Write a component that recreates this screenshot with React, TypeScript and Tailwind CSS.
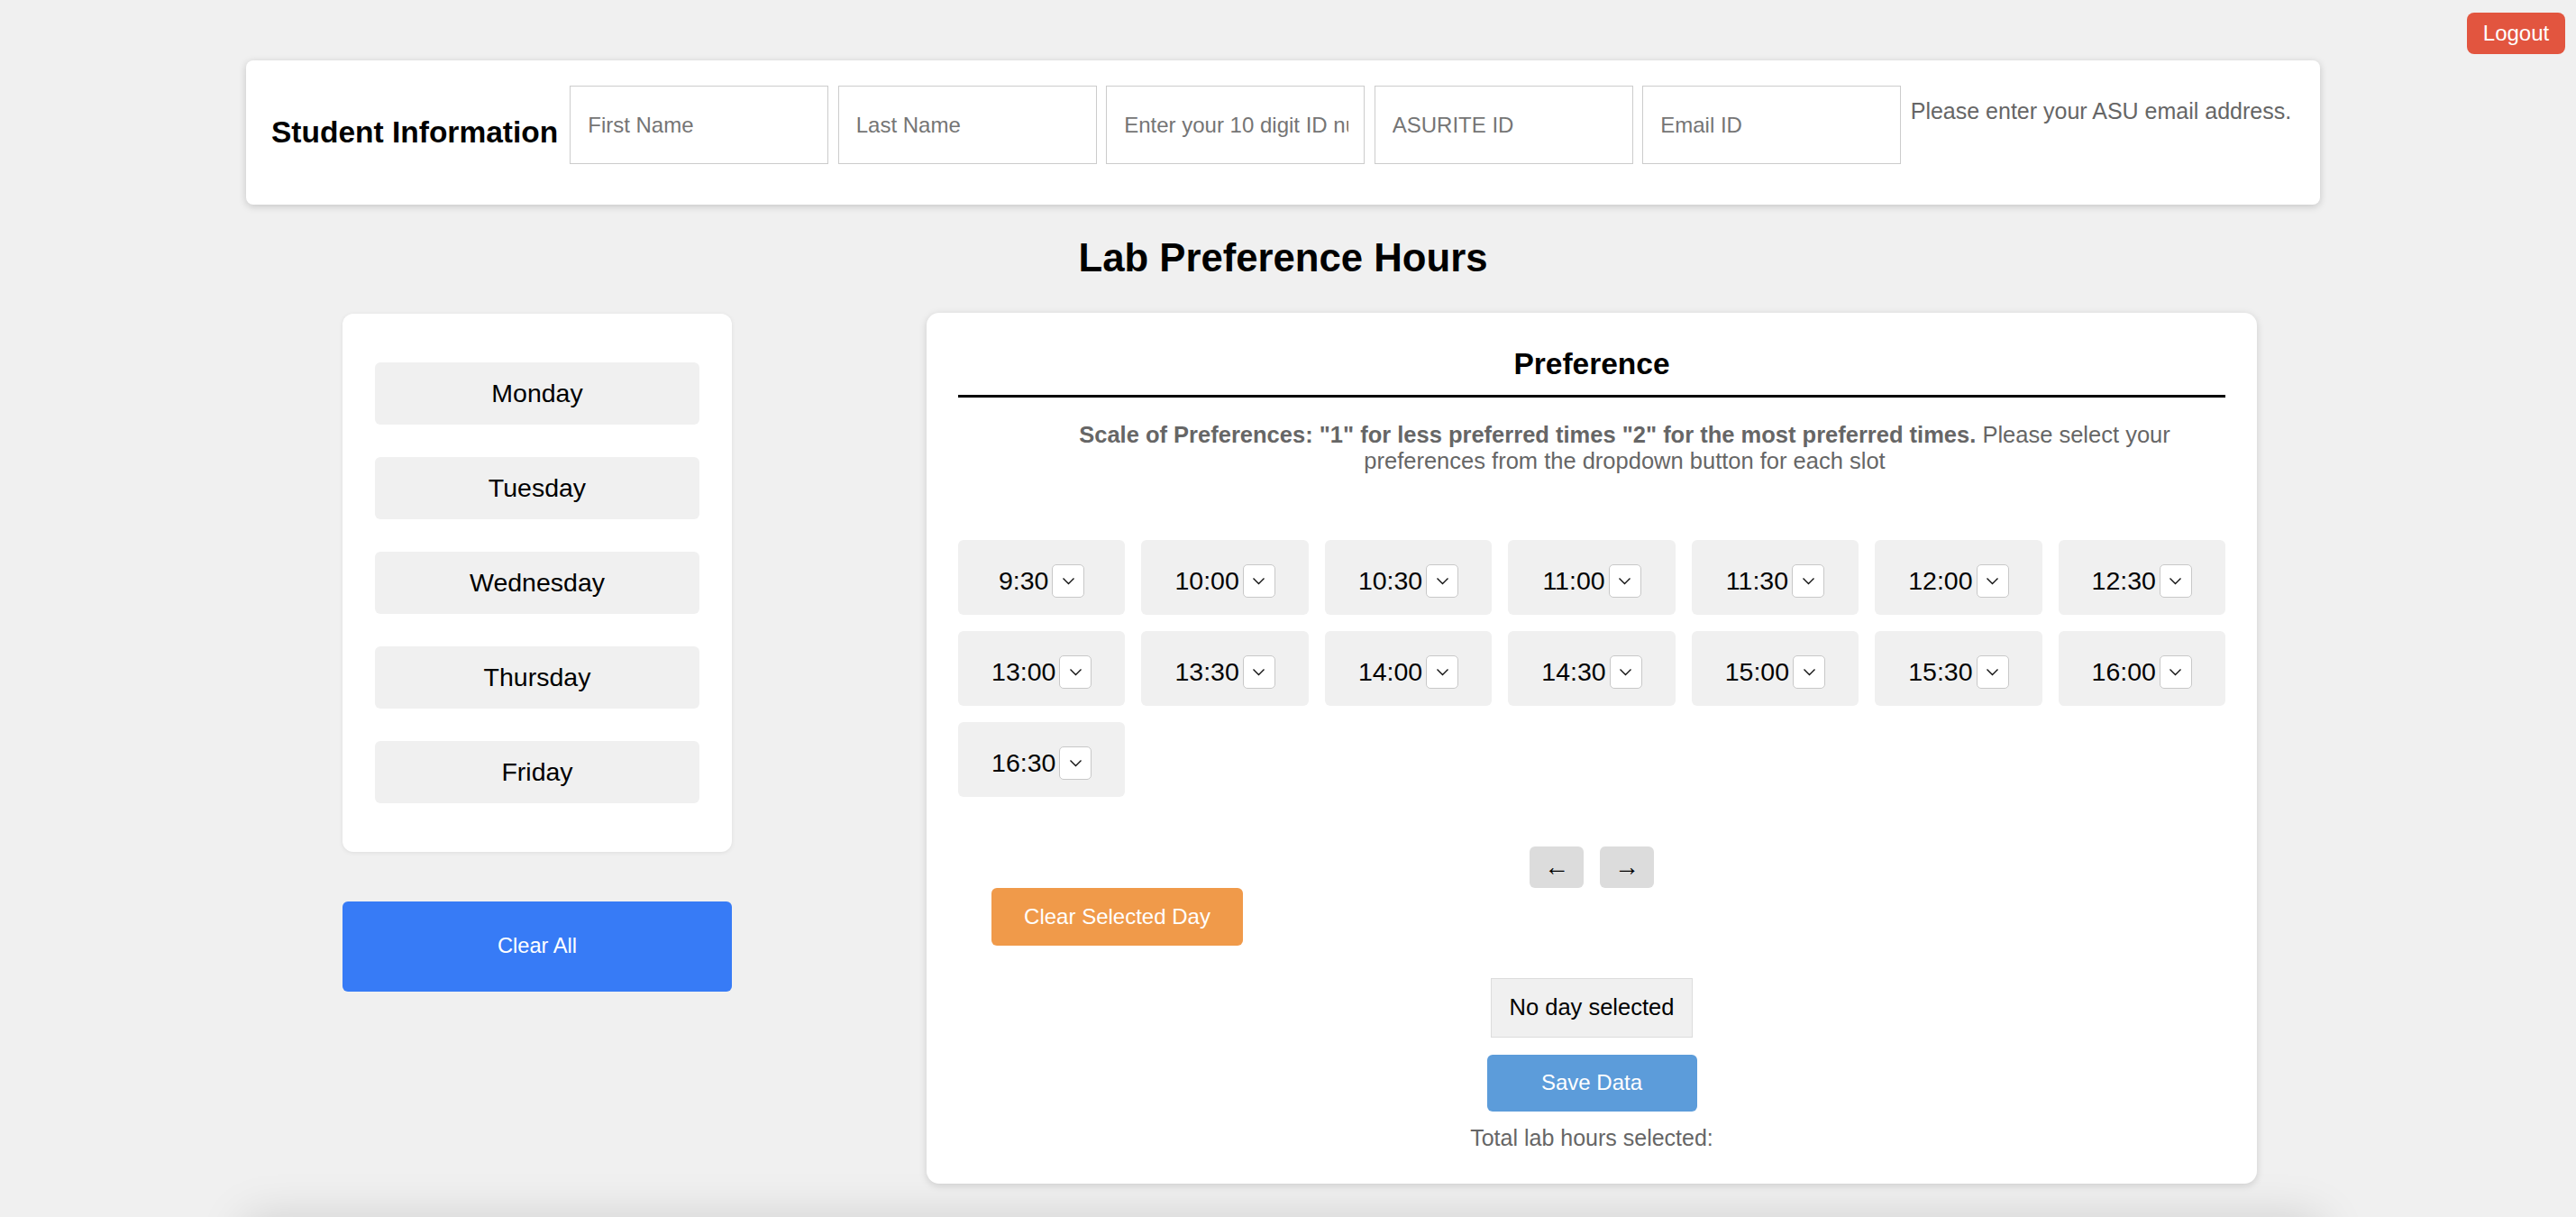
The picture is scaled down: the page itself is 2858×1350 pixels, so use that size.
import React, { useState } from "react";

const days = ["Monday", "Tuesday", "Wednesday", "Thursday", "Friday"];
const slots = [
  "9:30", "10:00", "10:30", "11:00", "11:30", "12:00", "12:30",
  "13:00", "13:30", "14:00", "14:30", "15:00", "15:30", "16:00", "16:30",
];

function Chevron() {
  return (
    <svg width="15" height="9" viewBox="0 0 15 9" fill="none">
      <polyline points="1.5,1.5 7.5,7.5 13.5,1.5" stroke="#111" strokeWidth="1.4" />
    </svg>
  );
}

export default function App() {
  const [selectedDay, setSelectedDay] = useState<string | null>(null);

  return (
    <div className="min-h-screen overflow-hidden bg-[#f0f0f0] font-['Liberation_Sans',Arial,sans-serif] text-black">
      <div className="flex justify-end pr-[12px] pt-[14px]">
        <button className="h-[46px] w-[109px] rounded-[8px] bg-[#e2553f] text-[24px] text-white">Logout</button>
      </div>

      <div className="ml-[273px] w-[2301px]">
        {/* student info */}
        <div className="mt-[7px] flex h-[160px] items-center rounded-[8px] bg-white pl-[28px] shadow-[0_2px_8px_rgba(0,0,0,0.18)]">
          <h3 className="text-[33.5px] font-bold leading-[40px]">Student Information</h3>
          <div className="mb-[17px] ml-[13px] flex items-start gap-[10.5px]">
            {["First Name", "Last Name", "Enter your 10 digit ID number", "ASURITE ID", "Email ID"].map((p) => (
              <input
                key={p}
                placeholder={p}
                className="h-[87px] w-[287px] border border-[#cccccc] bg-white pl-[19px] pr-[17px] text-[24px] outline-none placeholder:text-[#757575]"
              />
            ))}
            <p className="mt-[13.5px] text-[25px] leading-[29px] text-[#666]">Please enter your ASU email address.</p>
          </div>
        </div>

        <h2 className="mt-[34px] text-center text-[43.7px] font-bold leading-[50px]">Lab Preference Hours</h2>

        <div className="mt-[36px] flex items-start">
          {/* days column */}
          <div className="ml-[107px] mt-[1px] w-[432px]">
            <div className="flex flex-col rounded-[12px] bg-white p-[36px] shadow-[0_1px_5px_rgba(0,0,0,0.08)]">
              {days.map((d) => (
                <button
                  key={d}
                  onClick={() => setSelectedDay(d)}
                  className="my-[18px] h-[69px] rounded-[6px] bg-[#f0f0f0] text-[28.5px]"
                >
                  {d}
                </button>
              ))}
            </div>
            <button className="mt-[55px] h-[100px] w-full rounded-[6px] bg-[#377bf6] text-[23.7px] text-white">Clear All</button>
          </div>

          {/* preference card */}
          <div className="ml-[216px] w-[1476px] rounded-[14px] bg-white px-[35px] pb-[37px] pt-[38px] shadow-[0_2px_8px_rgba(0,0,0,0.15)]">
            <h3 className="border-b-[3.5px] border-black pb-[15px] text-center text-[33.5px] font-bold leading-[38px]">Preference</h3>
            <p className="mt-[27px] pl-[73px] text-center text-[25.5px] leading-[29px] text-[#666]">
              <b>Scale of Preferences: "1" for less preferred times "2" for the most preferred times.</b> Please select your preferences from the dropdown button for each slot
            </p>

            <div className="mt-[72.5px] grid grid-cols-7 gap-[18px]">
              {slots.map((s) => (
                <div key={s} className="flex h-[83px] items-center justify-center gap-[4px] rounded-[6px] bg-[#f0f0f0] pt-[8px]">
                  <span className="text-[28.5px] leading-[34px]">{s}</span>
                  <span className="flex h-[37px] w-[36px] items-center justify-center rounded-[5px] border border-[#c8c8c8] bg-white">
                    <Chevron />
                  </span>
                </div>
              ))}
            </div>

            <div className="mt-[55px] flex justify-center gap-[18px]">
              <button className="h-[46px] w-[60px] rounded-[6px] bg-[#dcdcdc] text-[28px]">←</button>
              <button className="h-[46px] w-[60px] rounded-[6px] bg-[#dcdcdc] text-[28px]">→</button>
            </div>

            <button className="ml-[37px] block h-[64px] w-[279px] rounded-[6px] bg-[#f09a4a] text-[24px] text-white">Clear Selected Day</button>

            <div className="mx-auto mt-[36px] flex h-[66px] w-[224px] items-center justify-center border border-[#dcdcdc] bg-[#f0f0f0] text-[25.5px]">
              {selectedDay ?? "No day selected"}
            </div>

            <button className="mx-auto mt-[19px] block h-[63px] w-[233px] rounded-[6px] bg-[#5c9cda] text-[24px] text-white">Save Data</button>

            <p className="mt-[15px] text-center text-[25px] leading-[28px] text-[#666]">Total lab hours selected:</p>
          </div>
        </div>

        <div className="mt-[40px] h-[300px] bg-[#f0f0f0] shadow-[0_0_50px_rgba(0,0,0,0.15)]"></div>
      </div>
    </div>
  );
}
